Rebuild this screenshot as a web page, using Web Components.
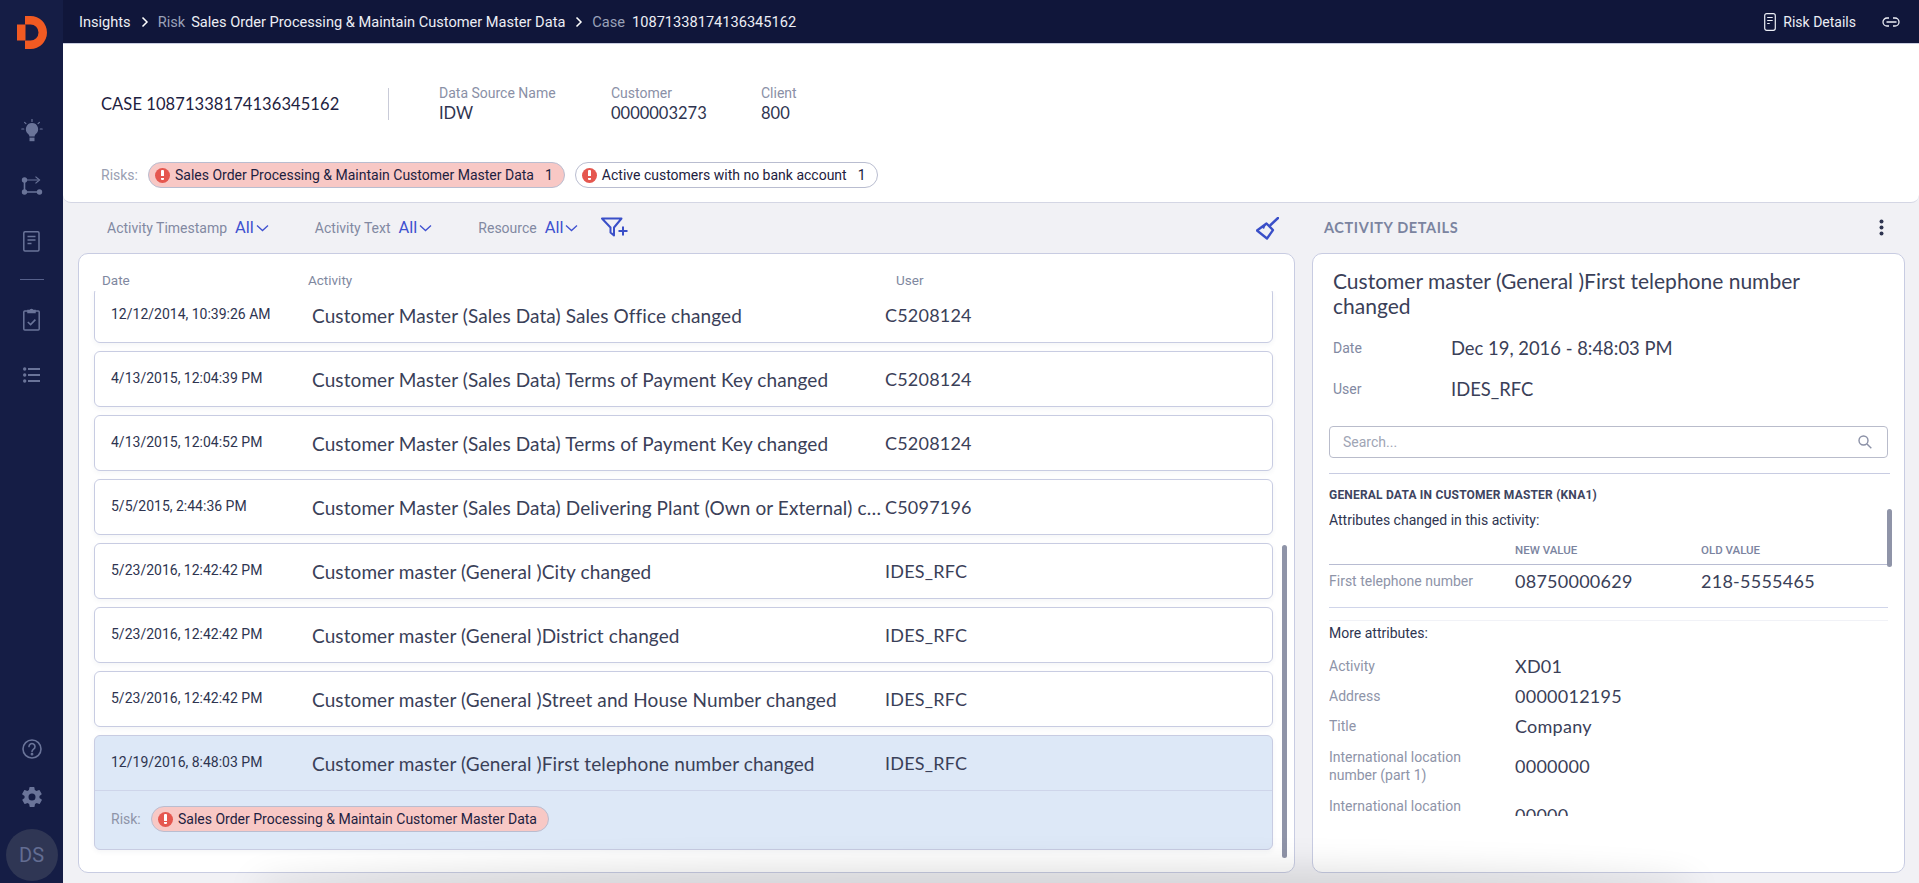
<!DOCTYPE html>
<html lang="en">
<head>
<meta charset="utf-8">
<title>Case 10871338174136345162</title>
<style>
  html, body { margin: 0; height: 100%; overflow: hidden; background: #f1f1f5; }
  body { font-family: Roboto, "Liberation Sans", sans-serif; color: #2e3450; }
</style>
</head>
<body>
<app-shell>
  <side-nav slot="nav"></side-nav>
  <top-bar slot="top"></top-bar>
  <case-header slot="header"></case-header>
  <filter-bar slot="filters"></filter-bar>
  <details-head slot="dhead"></details-head>
  <activity-list slot="list">
    <activity-row date="12/12/2014, 10:39:26 AM" user="C5208124">Customer Master (Sales Data) Sales Office changed</activity-row>
    <activity-row date="4/13/2015, 12:04:39 PM" user="C5208124">Customer Master (Sales Data) Terms of Payment Key changed</activity-row>
    <activity-row date="4/13/2015, 12:04:52 PM" user="C5208124">Customer Master (Sales Data) Terms of Payment Key changed</activity-row>
    <activity-row date="5/5/2015, 2:44:36 PM" user="C5097196">Customer Master (Sales Data) Delivering Plant (Own or External) changed</activity-row>
    <activity-row date="5/23/2016, 12:42:42 PM" user="IDES_RFC">Customer master (General )City changed</activity-row>
    <activity-row date="5/23/2016, 12:42:42 PM" user="IDES_RFC">Customer master (General )District changed</activity-row>
    <activity-row date="5/23/2016, 12:42:42 PM" user="IDES_RFC">Customer master (General )Street and House Number changed</activity-row>
    <activity-row selected date="12/19/2016, 8:48:03 PM" user="IDES_RFC" risk="Sales Order Processing &amp; Maintain Customer Master Data">Customer master (General )First telephone number changed</activity-row>
  </activity-list>
  <details-panel slot="details"></details-panel>
</app-shell>

<script>
const svgIcons = {
  bulb: `<svg width="22" height="24" viewBox="0 0 22 24"><g stroke="#6a7499" stroke-width="1.2" stroke-linecap="round"><path d="M11 .5v2M3.6 3.4l1.3 1.3M18.4 3.4l-1.3 1.3M.8 10h2M19.2 10h2"/></g><path d="M11 4a6.2 6.2 0 0 0-3.6 11.2c.7.6.9 1.4 1 2.3h5.2c.1-.9.3-1.7 1-2.3A6.2 6.2 0 0 0 11 4z" fill="#6a7499"/><path d="M8.5 18.6h5v3.6h-5z" fill="#6a7499"/></svg>`,
  flow: `<svg width="22" height="20" viewBox="0 0 22 20" fill="#6a7499"><circle cx="3.5" cy="4" r="2.7"/><circle cx="3.5" cy="16" r="2.7"/><circle cx="18.5" cy="16" r="2.7"/><path d="M2.7 4h1.6v12H2.7zM3.5 15.3h15v1.4h-15zM5 3.4h12v1.2H5z"/><path d="M14.5 .6l4 3.4-4 3.4" fill="none" stroke="#6a7499" stroke-width="1.2"/></svg>`,
  doc: `<svg width="17" height="21" viewBox="0 0 17 21" fill="none" stroke="#6a7499" stroke-width="1.5"><rect x=".8" y=".8" width="15.2" height="19.2" rx="1.2"/><path d="M4.5 5.5h8M4.5 9h8M4.5 12.5h4"/></svg>`,
  clip: `<svg width="17" height="23" viewBox="0 0 17 23" fill="none" stroke="#6a7499" stroke-width="1.5"><path d="M5 3H1.8a1 1 0 0 0-1 1v17a1 1 0 0 0 1 1h13.4a1 1 0 0 0 1-1V4a1 1 0 0 0-1-1H12"/><path d="M5 4.5V2.6h2A1.6 1.6 0 0 1 10 2.6h2v1.9z" fill="#6a7499"/><path d="M4.8 14l2.8 2.6 4.8-5" stroke-width="1.6"/></svg>`,
  list: `<svg width="17" height="16" viewBox="0 0 17 16" fill="#6a7499"><circle cx="1.7" cy="2" r="1.7"/><circle cx="1.7" cy="8" r="1.7"/><circle cx="1.7" cy="14" r="1.7"/><path d="M5 1h12v2H5zM5 7h12v2H5zM5 13h12v2H5z"/></svg>`,
  help: `<svg width="20" height="20" viewBox="0 0 20 20" fill="none" stroke="#6a7499" stroke-width="1.6"><circle cx="10" cy="10" r="9"/><path d="M7 7.6a3 3 0 1 1 4.6 2.5c-1 .7-1.6 1.2-1.6 2.4" stroke-linecap="round"/><circle cx="10" cy="15.2" r=".6" fill="#6a7499"/></svg>`,
  gear: `<svg width="24" height="24" viewBox="0 0 24 24" fill="#6a7499"><path d="M19.4 13c.1-.3.1-.7.1-1s0-.7-.1-1l2.1-1.6c.2-.2.2-.4.1-.6l-2-3.5c-.1-.2-.4-.3-.6-.2l-2.5 1c-.5-.4-1.100-.7-1.700-1l-.4-2.600c0-.2-.2-.4-.5-.4h-4c-.2 0-.4.2-.5.400l-.4 2.600c-.6.300-1.200.6-1.700 1l-2.500-1c-.2-.1-.5 0-.6.200l-2 3.500c-.1.200-.1.500.1.600L4.600 11c0 .3-.1.700-.1 1s0 .7.100 1l-2.100 1.600c-.2.200-.2.400-.1.600l2 3.500c.1.200.4.300.6.200l2.500-1c.5.400 1.100.7 1.700 1l.4 2.600c0 .2.200.4.500.4h4c.2 0 .5-.2.500-.4l.4-2.600c.6-.3 1.200-.6 1.700-1l2.500 1c.2.100.5 0 .6-.2l2-3.500c.1-.2.100-.4-.1-.6zM12 15.500a3.500 3.500 0 1 1 0-7 3.500 3.500 0 0 1 0 7z"/></svg>`
};

// outer frame: nav on the left, top bar + header + two panels on the right
class AppShell extends HTMLElement {
  constructor() {
    super();
    this.attachShadow({ mode: 'open' });
    this.shadowRoot.innerHTML = `
      <style>
        :host { display: flex; height: 883px; width: 1919px; position: relative; overflow: hidden; }
        .main { flex: 1; min-width: 0; display: flex; flex-direction: column; }
        .work {
          flex: 1; min-height: 0; display: grid;
          grid-template-columns: 1217px 593px; grid-template-rows: 50px 620px;
          column-gap: 17px; padding: 0 14px 10px 15px;
        }
        .shade {
          position: absolute; left: 270px; right: 240px; bottom: -14px; height: 14px;
          border-radius: 50%;
          box-shadow: 0 0 34px 16px rgba(0,0,0,.13);
          pointer-events: none;
        }
      </style>
      <slot name="nav"></slot>
      <div class="main">
        <slot name="top"></slot>
        <slot name="header"></slot>
        <div class="work">
          <slot name="filters"></slot>
          <slot name="dhead"></slot>
          <slot name="list"></slot>
          <slot name="details"></slot>
        </div>
      </div>
      <div class="shade"></div>
    `;
  }
}

class SideNav extends HTMLElement {
  constructor() {
    super();
    this.attachShadow({ mode: 'open' });
    this.shadowRoot.innerHTML = `
      <style>
        :host { display: flex; flex-direction: column; align-items: center; width: 63px; flex: none; height: 883px; background: #151d45; }
        .logo { margin-top: 16px; height: 33px; margin-bottom: 70px; }
        .logo svg, .it svg { display: block; }
        .it { height: 24px; display: flex; align-items: center; justify-content: center; }
        .rule { width: 24px; height: 1px; background: #56608a; margin: 26px 0 27px; }
        .spacer { flex: 1; }
        .av {
          width: 52px; height: 52px; border-radius: 50%; background: #2f3654; color: #636d92;
          display: flex; align-items: center; justify-content: center;
          font: 20px Roboto, sans-serif; margin: 20px 0 2px;
        }
      </style>
      <div class="logo"><svg width="30" height="33" viewBox="16 16 30 33"><path fill="#f15a22" d="M24 16h5.500a16.500 16.500 0 0 1 0 33H24v-8.500h5.500a8 8 0 0 0 0-16H24z"/><rect fill="#f15a22" x="16" y="24.500" width="8.500" height="16"/></svg></div>
      <div class="it">${svgIcons.bulb}</div>
      <div class="it" style="margin-top:31px">${svgIcons.flow}</div>
      <div class="it" style="margin-top:31px">${svgIcons.doc}</div>
      <div class="rule"></div>
      <div class="it">${svgIcons.clip}</div>
      <div class="it" style="margin-top:32px">${svgIcons.list}</div>
      <div class="spacer"></div>
      <div class="it">${svgIcons.help}</div>
      <div class="it" style="margin-top:24px">${svgIcons.gear}</div>
      <div class="av">DS</div>
    `;
  }
}

class TopBar extends HTMLElement {
  constructor() {
    super();
    this.attachShadow({ mode: 'open' });
    const chev = `<svg class="c" width="8" height="12" viewBox="0 0 8 12" fill="none" stroke="#fff" stroke-width="1.500"><path d="M1.500 1.500L6 6l-4.500 4.500"/></svg>`;
    this.shadowRoot.innerHTML = `
      <style>
        :host {
          display: flex; align-items: center; height: 44px; flex: none; background: #10163a;
          padding: 0 19px 0 16px; box-sizing: border-box; color: #eceef5;
          font: 14.600px Roboto, sans-serif; border-bottom: 1px solid #c9cde0;
        }
        .g { color: #9aa1b8; }
        .c { margin: 0 9px 0 10px; }
        .r { margin-left: auto; display: flex; align-items: center; font-size: 14px; }
        svg { display: block; }
        .sp { width: 6px; }
        .sq { width: 7px; }
      </style>
      <span>Insights</span>${chev}
      <span class="g">Risk</span><span class="sp"></span>
      <span>Sales Order Processing &amp; Maintain Customer Master Data</span>${chev}
      <span class="g">Case</span><span class="sq"></span><span>10871338174136345162</span>
      <div class="r">
        <svg width="12" height="18" viewBox="0 0 12 18" fill="none" stroke="#eceef5" stroke-width="1.200" style="margin-right:7px"><rect x=".7" y=".7" width="10.600" height="16.600" rx="2"/><path d="M3.200 4.500h5.500M3.200 7.500h5.500M3.200 10.500h2.500"/></svg>
        <span>Risk Details</span>
        <svg width="18" height="10" viewBox="0 0 18 10" fill="none" stroke="#eceef5" stroke-width="1.300" style="margin-left:26px"><path d="M7 1H5a4 4 0 0 0 0 8h2M11 1h2a4 4 0 0 1 0 8h-2M4.500 5h10"/></svg>
      </div>
    `;
  }
}

class RiskChip extends HTMLElement {
  constructor() {
    super();
    this.attachShadow({ mode: 'open' });
    this.shadowRoot.innerHTML = `
      <style>
        :host {
          display: inline-flex; align-items: center; height: 26px; box-sizing: border-box;
          border: 1px solid #b9bdd0; border-radius: 13px; background: #f8c8c5;
          padding: 0 11px 0 6px; font: 14px Roboto, sans-serif; color: #1d2140; white-space: nowrap;
        }
        :host([plain]) { background: #fff; }
        i {
          flex: none; width: 15px; height: 15px; border-radius: 50%; background: #e5574f; color: #fff;
          margin-right: 5px; display: flex; align-items: center; justify-content: center;
        }
        i::before { content: ""; width: 2.400px; height: 10px; background: linear-gradient(#fff 0 6.500px, transparent 6.500px 7.800px, #fff 7.800px); border-radius: 1px; }
        b { font-weight: 400; margin-left: 11px; }
      </style>
      <i></i><slot></slot>
    `;
    if (this.hasAttribute('count')) {
      const b = document.createElement('b');
      b.textContent = this.getAttribute('count');
      this.shadowRoot.appendChild(b);
    }
  }
}

class CaseHeader extends HTMLElement {
  constructor() {
    super();
    this.attachShadow({ mode: 'open' });
    this.shadowRoot.innerHTML = `
      <style>
        :host {
          display: block; height: 159px; flex: none; box-sizing: border-box; background: #fff;
          border-bottom: 1px solid #d4d6e4; border-radius: 0 0 8px 8px;
          padding: 40px 0 0 38px;
        }
        .top { display: flex; align-items: center; height: 40px; }
        h1 { margin: 0; font: 400 16.500px Lato, sans-serif; letter-spacing: .08px; color: #1d2140; width: 287px; border-right: 1px solid #c9cbd8; height: 32px; line-height: 33px; flex: none; }
        .f { font: 14px Roboto, sans-serif; color: #8a90a6; }
        .f div { font: 16.500px Lato, sans-serif; color: #2e3450; margin-top: 2px; }
        .f1 { margin-left: 50px; width: 172px; }
        .f2 { width: 150px; }
        .risks { display: flex; align-items: center; margin-top: 38px; font: 14px Roboto, sans-serif; color: #9a9fb2; }
        .risks span { width: 47px; }
        risk-chip + risk-chip { margin-left: 10px; }
      </style>
      <div class="top">
        <h1>CASE 10871338174136345162</h1>
        <div class="f f1">Data Source Name<div>IDW</div></div>
        <div class="f f2">Customer<div>0000003273</div></div>
        <div class="f">Client<div>800</div></div>
      </div>
      <div class="risks"><span>Risks:</span>
        <risk-chip count="1">Sales Order Processing &amp; Maintain Customer Master Data</risk-chip>
        <risk-chip plain count="1">Active customers with no bank account</risk-chip>
      </div>
    `;
  }
}

class FilterItem extends HTMLElement {
  constructor() {
    super();
    this.attachShadow({ mode: 'open' });
    this.shadowRoot.innerHTML = `
      <style>
        :host { display: flex; align-items: center; font: 14px Roboto, sans-serif; color: #8289a2; }
        span { font-size: 16.500px; color: #3f51d0; margin: -2px 2px 0 8px; }
        svg { display: block; }
      </style>
      <slot></slot><span>All</span>
      <svg width="13" height="8" viewBox="0 0 13 8" fill="none" stroke="#3f51d0" stroke-width="1.300"><path d="M1 1.500l5.500 5 5.500-5"/></svg>
    `;
  }
}

class FilterBar extends HTMLElement {
  constructor() {
    super();
    this.attachShadow({ mode: 'open' });
    this.shadowRoot.innerHTML = `
      <style>
        :host { display: flex; align-items: center; padding: 0 16px 0 29px; }
        filter-item { margin-right: 46px; }
        .add { margin-left: -23px; display: block; margin-top: -2px; }
        .clear { margin-left: auto; display: block; }
      </style>
      <filter-item>Activity Timestamp</filter-item>
      <filter-item>Activity Text</filter-item>
      <filter-item>Resource</filter-item>
      <svg class="add" width="27" height="20" viewBox="0 0 27 20" fill="none" stroke="#3a4fc8" stroke-width="2"><path d="M1 1.500h19.500l-7.500 9v8l-3.500-3v-5z" stroke-linejoin="round"/><path d="M17.500 14h9M22 9.500v9" stroke-width="2"/></svg>
      <svg class="clear" width="23" height="23" viewBox="0 0 23 23" fill="none" stroke="#3a4fc8" stroke-width="2.300"><path d="M22 1l-7.500 7" stroke-width="2.400" stroke-linecap="round"/><path d="M10.500 6.500l6.500 6.500-6 8.500-10-8z" stroke-linejoin="round"/><path d="M10.500 6.500l-5 4 2.500 1.500z" fill="#3a4fc8" stroke="none"/></svg>
    `;
  }
}

class DetailsHead extends HTMLElement {
  constructor() {
    super();
    this.attachShadow({ mode: 'open' });
    this.shadowRoot.innerHTML = `
      <style>
        :host { display: flex; align-items: center; justify-content: space-between; padding: 0 21px 2px 12px; font: 700 14.500px Lato, sans-serif; letter-spacing: .6px; color: #7b84a0; }
        svg { display: block; }
      </style>
      <span>ACTIVITY DETAILS</span>
      <svg width="5" height="17" viewBox="0 0 5 17" fill="#2e3450"><circle cx="2.500" cy="2.500" r="2"/><circle cx="2.500" cy="8.500" r="2"/><circle cx="2.500" cy="14.500" r="2"/></svg>
    `;
  }
}

class ActivityRow extends HTMLElement {
  constructor() {
    super();
    this.attachShadow({ mode: 'open' });
    const risk = this.getAttribute('risk');
    const extra = risk ? `<div class="risk"><span>Risk:</span><risk-chip></risk-chip></div>` : '';
    this.shadowRoot.innerHTML = `
      <style>
        :host {
          display: block; box-sizing: border-box; background: #fff; border: 1px solid #c8cce2; border-radius: 6px;
          margin-bottom: 8px; box-shadow: 0 2px 5px rgba(40,50,90,.05);
        }
        :host([selected]) { background: #dde8f7; }
        .main { display: flex; align-items: center; height: 54px; padding-left: 16px; white-space: nowrap; }
        .d { width: 201px; flex: none; font: 14px Roboto, sans-serif; color: #2e3450; margin-top: -2px; }
        .a { width: 572px; margin-right: 1px; flex: none; overflow: hidden; text-overflow: ellipsis; font: 19px Lato, sans-serif; letter-spacing: .1px; color: #3a4058; }
        .u { font: 18px Lato, sans-serif; letter-spacing: .2px; color: #3a4058; }
        .risk { border-top: 1px solid #ced5ea; height: 59px; display: flex; align-items: center; padding: 0 0 2px 16px; box-sizing: border-box; font: 14px Roboto, sans-serif; color: #8e94a8; }
        .risk span { width: 40px; }
      </style>
      <div class="main"><div class="d"></div><div class="a"><slot></slot></div><div class="u"></div></div>
      ${extra}
    `;
    this.shadowRoot.querySelector('.d').textContent = this.getAttribute('date');
    this.shadowRoot.querySelector('.u').textContent = this.getAttribute('user');
    if (risk) this.shadowRoot.querySelector('risk-chip').textContent = risk;
  }
}

class ActivityList extends HTMLElement {
  constructor() {
    super();
    this.attachShadow({ mode: 'open' });
    this.shadowRoot.innerHTML = `
      <style>
        :host {
          display: flex; flex-direction: column; position: relative; box-sizing: border-box; background: #fff;
          border: 1px solid #c8cce2; border-radius: 10px; overflow: hidden;
        }
        .head { display: flex; height: 37px; flex: none; align-items: center; padding-top: 14px; box-sizing: border-box; font: 13.500px Roboto, sans-serif; color: #8088a0; }
        .head span:nth-child(1) { margin-left: 23px; width: 206px; }
        .head span:nth-child(2) { width: 588px; }
        .view { flex: 1; min-height: 0; overflow: hidden; padding: 0 21px 0 15px; }
        .inner { margin-top: -4px; }
        .thumb { position: absolute; left: 1203px; top: 291px; width: 5px; height: 313px; border-radius: 3px; background: #8f94a8; }
      </style>
      <div class="head"><span>Date</span><span>Activity</span><span>User</span></div>
      <div class="view"><div class="inner"><slot></slot></div></div>
      <div class="thumb"></div>
    `;
  }
}

class AttrRow extends HTMLElement {
  constructor() {
    super();
    this.attachShadow({ mode: 'open' });
    this.shadowRoot.innerHTML = `
      <style>
        :host { display: flex; align-items: center; min-height: 30px; font: 14px/18px Roboto, sans-serif; color: #8e94a8; }
        .l { width: 186px; flex: none; }
        .v, .o { font: 18px Lato, sans-serif; letter-spacing: .25px; color: #3a4058; }
        .v { width: 186px; }
      </style>
      <div class="l"><slot></slot></div><div class="v"></div><div class="o"></div>
    `;
    this.shadowRoot.querySelector('.v').textContent = this.getAttribute('value');
    this.shadowRoot.querySelector('.o').textContent = this.getAttribute('old') || '';
  }
}

class DetailsPanel extends HTMLElement {
  constructor() {
    super();
    this.attachShadow({ mode: 'open' });
    this.shadowRoot.innerHTML = `
      <style>
        :host {
          display: block; position: relative; box-sizing: border-box; background: #fff;
          border: 1px solid #c8cce2; border-radius: 10px; padding: 0 15px 0 16px; overflow: hidden;
        }
        h2 { margin: 14px 0 0 4px; font: 400 21px/25px Lato, sans-serif; color: #3a4058; width: 480px; }
        .kv { display: flex; align-items: center; margin-left: 4px; height: 41px; font: 14px Roboto, sans-serif; color: #8289a2; }
        .kv span { width: 118px; }
        .kv b { font: 400 18.400px Lato, sans-serif; color: #3a4058; }
        .first { margin-top: 9px; }
        .search { margin-top: 17px; width: 559px; height: 32px; box-sizing: border-box; border: 1px solid #b9bccb; border-radius: 4px; display: flex; align-items: center; justify-content: space-between; padding: 0 15px 0 13px; font: 14px Roboto, sans-serif; color: #a0a5b5; }
        svg { display: block; }
        .scroll { margin-top: 15px; width: 561px; height: 343px; overflow: hidden; border-top: 1px solid #c8cce2; box-sizing: border-box; }
        .sec { margin-top: 14px; font: 700 12px Roboto, sans-serif; letter-spacing: .2px; color: #3e4460; }
        .sub { font: 14px Roboto, sans-serif; color: #2e3450; }
        .cols { display: flex; padding-left: 186px; margin-top: 15px; font: 500 11.500px Roboto, sans-serif; color: #7b84a0; width: 559px; box-sizing: border-box; padding-bottom: 7px; border-bottom: 1px solid #b8bcd2; }
        .cols span { width: 186px; }
        .d1 { border-bottom: 1px solid #d0d5ea; padding: 1px 0 11px; width: 559px; }
        .d2 { border-top: 1px solid #f1f2f7; margin-top: 12px; width: 559px; padding-top: 4px; }
        .thumb { position: absolute; left: 574px; top: 255px; width: 5px; height: 58px; border-radius: 3px; background: #8f94a8; }
        attr-row.two { margin-top: 7px; }
        attr-row.two + attr-row.two { margin-top: 13px; }
      </style>
      <h2>Customer master (General )First telephone number changed</h2>
      <div class="kv first"><span>Date</span><b>Dec 19, 2016 - 8:48:03 PM</b></div>
      <div class="kv"><span>User</span><b>IDES_RFC</b></div>
      <div class="search">Search...
        <svg width="14" height="14" viewBox="0 0 14 14" fill="none" stroke="#8a90a6" stroke-width="1.400"><circle cx="5.500" cy="5.500" r="4.500"/><path d="M9 9l4.300 4.300"/></svg>
      </div>
      <div class="scroll">
        <div class="sec">GENERAL DATA IN CUSTOMER MASTER (KNA1)</div>
        <div class="sub" style="margin-top:10px">Attributes changed in this activity:</div>
        <div class="cols"><span>NEW VALUE</span><span>OLD VALUE</span></div>
        <div class="d1"><attr-row value="08750000629" old="218-5555465">First telephone number</attr-row></div>
        <div class="d2"></div>
        <div class="sub">More attributes:</div>
        <div style="margin-top:10px"></div>
        <attr-row value="XD01">Activity</attr-row>
        <attr-row value="0000012195">Address</attr-row>
        <attr-row value="Company">Title</attr-row>
        <attr-row class="two" value="0000000">International location<br>number (part 1)</attr-row>
        <attr-row class="two" value="00000">International location<br>number (part 2)</attr-row>
      </div>
      <div class="thumb"></div>
    `;
  }
}

// children first so the chips inside rows are already known
customElements.define('risk-chip', RiskChip);
customElements.define('filter-item', FilterItem);
customElements.define('attr-row', AttrRow);
customElements.define('side-nav', SideNav);
customElements.define('top-bar', TopBar);
customElements.define('case-header', CaseHeader);
customElements.define('filter-bar', FilterBar);
customElements.define('details-head', DetailsHead);
customElements.define('activity-row', ActivityRow);
customElements.define('activity-list', ActivityList);
customElements.define('details-panel', DetailsPanel);
customElements.define('app-shell', AppShell);
</script>
</body>
</html>
